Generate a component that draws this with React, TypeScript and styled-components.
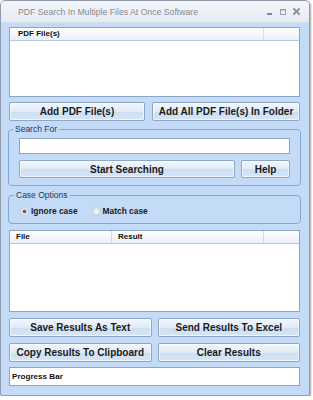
import React from "react";
import styled, { createGlobalStyle } from "styled-components";

const Global = createGlobalStyle`
  html, body { margin: 0; padding: 0; background: #ffffff; }
  body { font-family: "Liberation Sans", Arial, sans-serif; }
  * { box-sizing: border-box; }
`;

const Window = styled.div`
  width: 310px;
  height: 396px;
  display: flex;
  flex-direction: column;
  background: #c3dbf6;
  border: 1px solid #8e9cad;
  border-radius: 5px 5px 2px 2px;
  box-shadow: 1px 1px 2px rgba(0, 0, 0, 0.35);
  overflow: hidden;
`;

const TitleBar = styled.div`
  height: 22px;
  flex: none;
  display: flex;
  align-items: center;
  padding: 0 8px 0 17px;
  background: linear-gradient(#f4f6f9, #e6ebf2);
  border-bottom: 1px solid #d5dde8;
`;

const Title = styled.div`
  flex: 1;
  font-size: 8.7px;
  color: #858b93;
  white-space: nowrap;
`;

const Controls = styled.div`
  display: flex;
  align-items: center;
  gap: 5px;
`;

const Ctl = styled.svg`
  width: 8px;
  height: 8px;
  display: block;
`;

const Content = styled.div`
  flex: 1;
  display: flex;
  flex-direction: column;
  padding: 4px 9px 0 8px;
`;

const List = styled.div<{ $h: number; $mt?: number }>`
  height: ${(p) => p.$h}px;
  margin-top: ${(p) => p.$mt ?? 0}px;
  flex: none;
  background: #ffffff;
  border: 1px solid #8ba6c6;
  display: flex;
  flex-direction: column;
`;

const Header = styled.div<{ $cols: string }>`
  height: 13px;
  display: grid;
  grid-template-columns: ${(p) => p.$cols};
  background: linear-gradient(#ffffff, #e9f0f9);
  border-bottom: 1px solid #b6c9e0;
`;

const HeadCell = styled.div`
  font-size: 8px;
  font-weight: bold;
  color: #111;
  line-height: 12px;
  padding-left: 6px;
  border-right: 1px solid #d3dde9;
  white-space: nowrap;
  &:last-child { border-right: none; }
`;

const Row = styled.div<{ $cols: string; $mt: number; $gap: number }>`
  display: grid;
  grid-template-columns: ${(p) => p.$cols};
  gap: ${(p) => p.$gap}px;
  margin-top: ${(p) => p.$mt}px;
  flex: none;
`;

const Button = styled.button<{ $h?: number }>`
  height: ${(p) => p.$h ?? 19}px;
  margin: 0;
  padding: 0;
  font-family: "Liberation Sans", Arial, sans-serif;
  font-size: 10px;
  font-weight: bold;
  color: #1a1a1a;
  white-space: nowrap;
  background: linear-gradient(#f1f6fc 0%, #e0ebf8 50%, #cddff3 51%, #d6e5f6 100%);
  border: 1px solid #8fa7c4;
  border-radius: 2px;
  box-shadow: inset 0 0 0 1px rgba(255, 255, 255, 0.6);
`;

const Group = styled.fieldset<{ $mt: number; $pad: string }>`
  margin: ${(p) => p.$mt}px -1px 0 -1px;
  padding: ${(p) => p.$pad};
  border: 1px solid #86a6cf;
  border-radius: 4px;
  flex: none;
  min-width: 0;
`;

const Legend = styled.legend`
  font-size: 8.5px;
  line-height: 10px;
  color: #1d3661;
  padding: 0 2px;
  margin-left: -6px;
`;

const TextInput = styled.input`
  display: block;
  width: 100%;
  height: 16px;
  margin: 0;
  padding: 0 3px;
  border: 1px solid #8ba6c6;
  background: #ffffff;
  outline: none;
`;

const Radios = styled.div`
  display: flex;
  align-items: center;
  height: 12px;
  gap: 14px;
`;

const RadioItem = styled.label`
  display: flex;
  align-items: center;
  gap: 2px;
  font-size: 8.4px;
  font-weight: bold;
  color: #1a1a1a;
`;

const RadioDot = styled.span<{ $on?: boolean }>`
  width: 9px;
  height: 9px;
  border-radius: 50%;
  border: 1px solid #c4ccd6;
  background: radial-gradient(circle, ${(p) => (p.$on ? "#5c6670 0, #5c6670 1.6px, #e9edf2 2.2px" : "#f0f3f6 0")}, #dde3ea 100%);
  display: block;
`;

const Progress = styled.div`
  height: 19px;
  margin-top: 5px;
  background: #ffffff;
  border: 1px solid #8ba6c6;
  font-size: 8.1px;
  font-weight: bold;
  color: #111;
  line-height: 17px;
  padding-left: 2px;
  flex: none;
`;

export default function App() {
  return (
    <>
      <Global />
      <Window>
        <TitleBar>
          <Title>PDF Search In Multiple Files At Once Software</Title>
          <Controls>
            <Ctl viewBox="0 0 8 8">
              <rect x="1" y="5" width="5" height="2" fill="#7d8793" />
            </Ctl>
            <Ctl viewBox="0 0 8 8">
              <rect x="1.5" y="1.5" width="5" height="5" fill="none" stroke="#98a1ab" strokeWidth="1" />
              <rect x="1" y="1" width="6" height="1.5" fill="#98a1ab" />
            </Ctl>
            <Ctl viewBox="0 0 8 8" style={{ width: 9, height: 9 }}>
              <path d="M1.2 1.2 L6.8 6.8 M6.8 1.2 L1.2 6.8" stroke="#7d8793" strokeWidth="1.4" />
            </Ctl>
          </Controls>
        </TitleBar>
        <Content>
          <List $h={70}>
            <Header $cols="254px 1fr">
              <HeadCell style={{ paddingLeft: 8 }}>PDF File(s)</HeadCell>
              <HeadCell />
            </Header>
          </List>
          <Row $cols="136px 1fr" $gap={7} $mt={5}>
            <Button>Add PDF File(s)</Button>
            <Button>Add All PDF File(s) In Folder</Button>
          </Row>
          <Group $mt={3} $pad="4px 10px 7px 10px">
            <Legend>Search For</Legend>
            <TextInput />
            <Row $cols="1fr 49px" $gap={6} $mt={6}>
              <Button $h={18}>Start Searching</Button>
              <Button $h={18}>Help</Button>
            </Row>
          </Group>
          <Group $mt={4} $pad="5px 11px 6px 11px">
            <Legend>Case Options</Legend>
            <Radios>
              <RadioItem>
                <RadioDot $on />
                Ignore case
              </RadioItem>
              <RadioItem>
                <RadioDot />
                Match case
              </RadioItem>
            </Radios>
          </Group>
          <List $h={82} $mt={6}>
            <Header $cols="102px 152px 1fr">
              <HeadCell>File</HeadCell>
              <HeadCell>Result</HeadCell>
              <HeadCell />
            </Header>
          </List>
          <Row $cols="1fr 1fr" $gap={6} $mt={6}>
            <Button>Save Results As Text</Button>
            <Button>Send Results To Excel</Button>
          </Row>
          <Row $cols="1fr 1fr" $gap={6} $mt={6}>
            <Button>Copy Results To Clipboard</Button>
            <Button>Clear Results</Button>
          </Row>
          <Progress>Progress Bar</Progress>
        </Content>
      </Window>
    </>
  );
}
